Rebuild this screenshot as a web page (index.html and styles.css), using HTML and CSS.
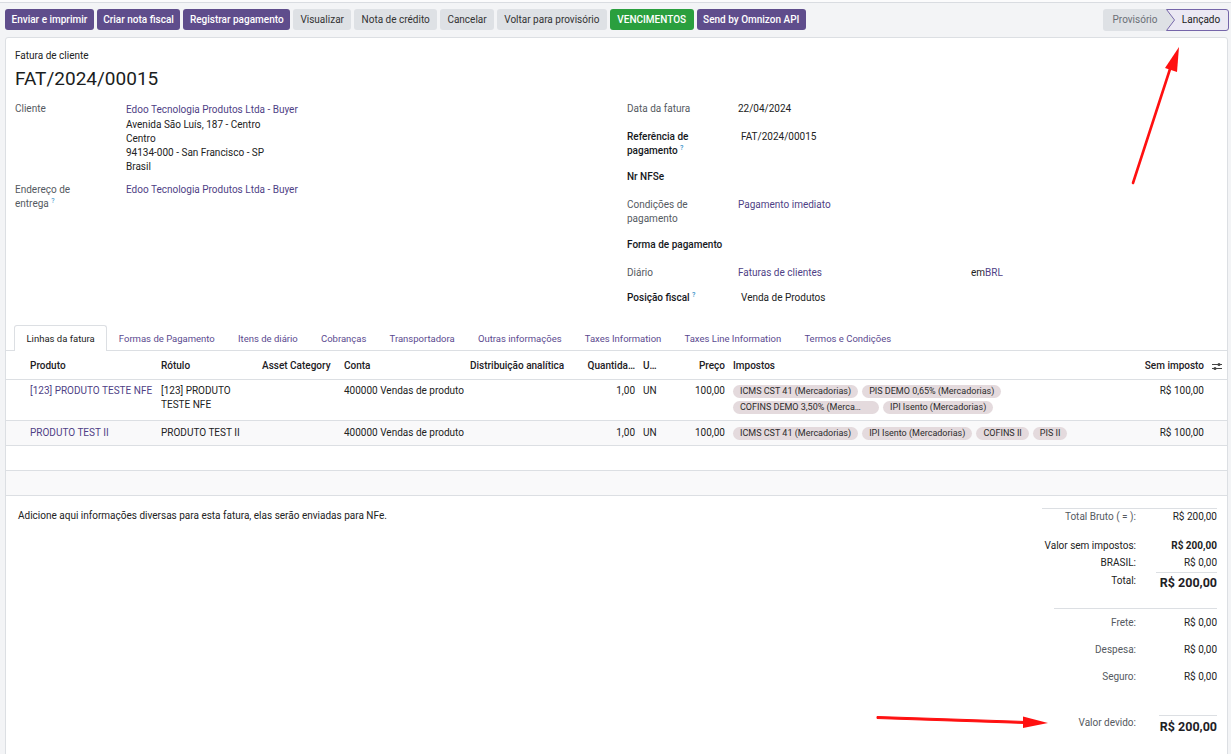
FILE: index.html
```html
<!DOCTYPE html>
<html lang="pt-BR">
<head>
<meta charset="utf-8">
<title>FAT/2024/00015</title>
<link rel="stylesheet" href="styles.css">
</head>
<body>
<div class="topline"></div>
<div class="cp">
  <div class="btns">
    <span class="btn pri">Enviar e imprimir</span>
    <span class="btn pri">Criar nota fiscal</span>
    <span class="btn pri">Registrar pagamento</span>
    <span class="btn sec">Visualizar</span>
    <span class="btn sec">Nota de crédito</span>
    <span class="btn sec">Cancelar</span>
    <span class="btn sec">Voltar para provisório</span>
    <span class="btn suc">VENCIMENTOS</span>
    <span class="btn pri">Send by Omnizon API</span>
  </div>
  <div class="status">
    <svg class="status-bg" width="126" height="22" viewBox="0 0 126 22">
      <path d="M3,0 H63 L71,11 L63,22 H3 Q0,22 0,19 V3 Q0,0 3,0 Z" fill="#dee1e5"/>
      <path d="M63.5,0.5 L71.5,11 L63.5,21.5 H123 Q125.5,21.5 125.5,19 V3 Q125.5,0.5 123,0.5 Z" fill="#ebe8f3" stroke="#7565a9"/>
    </svg>
    <span class="st st-draft">Provisório</span>
    <span class="st st-posted">Lançado</span>
  </div>
</div>

<div class="sheet">
  <div class="head">
    <div class="doctype">Fatura de cliente</div>
    <h1>FAT/2024/00015</h1>
  </div>

  <div class="groups">
    <div class="group gleft">
      <div class="row">
        <div class="lbl">Cliente</div>
        <div class="val">
          <div class="link first">Edoo Tecnologia Produtos Ltda - Buyer</div>
          <div>Avenida São Luís, 187 - Centro</div>
          <div>Centro</div>
          <div>94134-000 - San Francisco - SP</div>
          <div>Brasil</div>
        </div>
      </div>
      <div class="row">
        <div class="lbl">Endereço de<br>entrega <sup>?</sup></div>
        <div class="val"><div class="link">Edoo Tecnologia Produtos Ltda - Buyer</div></div>
      </div>
    </div>

    <div class="group gright">
      <div class="row">
        <div class="lbl">Data da fatura</div>
        <div class="val">22/04/2024</div>
      </div>
      <div class="row">
        <div class="lbl strong">Referência de<br>pagamento <sup>?</sup></div>
        <div class="val ind">FAT/2024/00015</div>
      </div>
      <div class="row">
        <div class="lbl strong">Nr NFSe</div>
        <div class="val"></div>
      </div>
      <div class="row">
        <div class="lbl">Condições de<br>pagamento</div>
        <div class="val link">Pagamento imediato</div>
      </div>
      <div class="row">
        <div class="lbl strong nowrap">Forma de pagamento</div>
        <div class="val"></div>
      </div>
      <div class="row">
        <div class="lbl">Diário</div>
        <div class="val split"><span class="link">Faturas de clientes</span><span class="cur">em</span><span class="link">BRL</span></div>
      </div>
      <div class="row tight">
        <div class="lbl strong">Posição fiscal <sup>?</sup></div>
        <div class="val ind">Venda de Produtos</div>
      </div>
    </div>
  </div>

  <div class="tabs">
    <span class="tab active">Linhas da fatura</span>
    <span class="tab">Formas de Pagamento</span>
    <span class="tab">Itens de diário</span>
    <span class="tab">Cobranças</span>
    <span class="tab">Transportadora</span>
    <span class="tab">Outras informações</span>
    <span class="tab">Taxes Information</span>
    <span class="tab">Taxes Line Information</span>
    <span class="tab">Termos e Condições</span>
  </div>

  <table class="lines">
    <colgroup>
      <col class="c-prod"><col class="c-rot"><col class="c-asset"><col class="c-conta"><col class="c-dist">
      <col class="c-qty"><col class="c-uom"><col class="c-price"><col class="c-tax"><col class="c-sub"><col class="c-opt">
    </colgroup>
    <thead>
      <tr>
        <th class="first">Produto</th>
        <th>Rótulo</th>
        <th>Asset Category</th>
        <th>Conta</th>
        <th>Distribuição analítica</th>
        <th class="r">Quantida…</th>
        <th>U…</th>
        <th class="r">Preço</th>
        <th>Impostos</th>
        <th class="r">Sem imposto</th>
        <th class="opt">
          <svg width="10" height="9" viewBox="0 0 10 9"><path d="M0 2.5H10M0 6.5H10" stroke="#444" stroke-width="1"/><circle cx="7" cy="2.5" r="1.5" fill="#444"/><circle cx="3" cy="6.5" r="1.5" fill="#444"/></svg>
        </th>
      </tr>
    </thead>
    <tbody>
      <tr class="tall">
        <td class="first link">[123] PRODUTO TESTE NFE</td>
        <td>[123] PRODUTO<br>TESTE NFE</td>
        <td></td>
        <td>400000 Vendas de produto</td>
        <td></td>
        <td class="r">1,00</td>
        <td>UN</td>
        <td class="r">100,00</td>
        <td class="taxes">
          <span class="tag">ICMS CST 41 (Mercadorias)</span><span class="tag">PIS DEMO 0,65% (Mercadorias)</span><br>
          <span class="tag trunc">COFINS DEMO 3,50% (Merca…</span><span class="tag">IPI Isento (Mercadorias)</span>
        </td>
        <td class="r">R$ 100,00</td>
        <td></td>
      </tr>
      <tr class="alt">
        <td class="first link">PRODUTO TEST II</td>
        <td>PRODUTO TEST II</td>
        <td></td>
        <td>400000 Vendas de produto</td>
        <td></td>
        <td class="r">1,00</td>
        <td>UN</td>
        <td class="r">100,00</td>
        <td class="taxes">
          <span class="tag">ICMS CST 41 (Mercadorias)</span><span class="tag">IPI Isento (Mercadorias)</span><span class="tag">COFINS II</span><span class="tag">PIS II</span>
        </td>
        <td class="r">R$ 100,00</td>
        <td></td>
      </tr>
      <tr class="empty"><td colspan="11"></td></tr>
      <tr class="empty alt"><td colspan="11"></td></tr>
    </tbody>
  </table>

  <div class="footer">
    <div class="notes">Adicione aqui informações diversas para esta fatura, elas serão enviadas para NFe.</div>
    <div class="totals">
      <div class="trow t-bruto"><span class="tl">Total Bruto ( = ):</span><span class="tv">R$ 200,00</span></div>
      <div class="trow t-untaxed"><span class="tl dark">Valor sem impostos:</span><span class="tv b">R$ 200,00</span></div>
      <div class="trow t-tax"><span class="tl dark">BRASIL:</span><span class="tv">R$ 0,00</span></div>
      <div class="trow t-total"><span class="tl dark">Total:</span><span class="tv big">R$ 200,00</span></div>
      <div class="trow t-frete"><span class="tl">Frete:</span><span class="tv">R$ 0,00</span></div>
      <div class="trow t-gap"><span class="tl">Despesa:</span><span class="tv">R$ 0,00</span></div>
      <div class="trow t-gap"><span class="tl">Seguro:</span><span class="tv">R$ 0,00</span></div>
      <div class="trow t-due"><span class="tl">Valor devido:</span><span class="tv big">R$ 200,00</span></div>
    </div>
  </div>
</div>

<svg class="arrows" width="1231" height="754" viewBox="0 0 1231 754">
  <line x1="1133" y1="183" x2="1171" y2="66" stroke="#ff1010" stroke-width="2.6" stroke-linecap="round"/>
  <polygon points="1179,47 1165,68 1177,72" fill="#ff1010"/>
  <path d="M877,716.5 L1026,721.5 L1026,723.5 L877,718.5 Z" fill="#ff1010" stroke="#ff1010" stroke-width="1"/>
  <polygon points="1023,716.5 1048,723 1023,728" fill="#ff1010"/>
</svg>
</body>
</html>
```

FILE: styles.css
```css
* { box-sizing: border-box; }

html, body { height: 754px; }

body {
  margin: 0;
  background: #f3f4f6;
  font-family: Roboto, "Liberation Sans", Arial, sans-serif;
  font-size: 10px;
  color: #212529;
  position: relative;
  overflow: hidden;
}

.topline {
  height: 3px;
  background: #fbfbfc;
  border-bottom: 1px solid #d9dce1;
}

.cp {
  display: flex;
  justify-content: space-between;
  align-items: flex-start;
  padding: 6px 2px 6px 5px;
}

.btns { display: flex; gap: 3px; }

.btn {
  display: inline-block;
  height: 21px;
  line-height: 21px;
  padding: 0 7.3px;
  border-radius: 3px;
  font-size: 10px;
  white-space: nowrap;
}
.pri { background: #5f4d8c; color: #fff; font-weight: 500; padding: 0 6.5px; }
.sec { background: #dee1e5; color: #333; }
.suc { background: #2a9f3e; color: #fff; font-weight: 500; padding: 0 7.5px; }

.status {
  position: relative;
  width: 126px;
  height: 22px;
  display: flex;
}
.status-bg { position: absolute; left: 0; top: 0; }
.st {
  position: relative;
  height: 22px;
  line-height: 22px;
  font-size: 10px;
  text-align: center;
}
.st-draft { width: 64px; color: #6b6f76; }
.st-posted { width: 62px; padding-left: 6px; color: #222; }

.sheet {
  margin: 0 3px 0 5px;
  background: #fff;
  border: 1px solid #dcdfe3;
  border-radius: 3px;
  min-height: 740px;
}

.head { padding: 11px 9px 0; }
.doctype { line-height: 14px; font-size: 10px; color: #222; }
h1 {
  margin: 4px 0 0;
  font-size: 19px;
  line-height: 24px;
  font-weight: 400;
  color: #1a1d21;
}

.groups {
  display: flex;
  align-items: flex-start;
  padding: 0 9px;
  margin-top: 11px;
}
.group {
  flex: 0 0 612px;
  display: flex;
  flex-direction: column;
  gap: 12px;
}
.gleft { gap: 9px; }
.gright { flex: 1; }

.row {
  display: flex;
  min-height: 16px;
  line-height: 14px;
}
.row.tight { margin-top: -3px; }
.lbl {
  flex: 0 0 111px;
  color: #555a61;
}
.lbl.strong { color: #15181c; font-weight: 500; }
.lbl.nowrap { white-space: nowrap; }
.lbl sup {
  font-size: 7px;
  color: #2f8fc8;
  vertical-align: 4px;
  line-height: 0;
}
.val { flex: 1; color: #222; }
.val .first { line-height: 16px; }
.val.ind { padding-left: 3px; }
.split { display: flex; }
.split > .link:first-child { width: 233px; }
.cur { color: #222; }

.link { color: #4f3f86; }

.tabs {
  margin-top: 18px;
  padding-left: 8px;
  border-bottom: 1px solid #dcdfe3;
  display: flex;
  height: 26px;
}
.tab {
  height: 26px;
  line-height: 25px;
  padding: 0 10.6px;
  font-size: 9.5px;
  color: #5b4a8f;
  border: 1px solid transparent;
  border-bottom: none;
  white-space: nowrap;
}
.tab.active {
  color: #222;
  background: #fff;
  border-color: #dcdfe3;
  border-radius: 3px 3px 0 0;
  margin-bottom: -1px;
  padding: 0 11.5px;
}

.lines {
  width: 1221px;
  border-collapse: collapse;
  table-layout: fixed;
}
.c-prod { width: 151px; }
.c-rot { width: 101px; }
.c-asset { width: 82px; }
.c-conta { width: 126px; }
.c-dist { width: 115px; }
.c-qty { width: 58px; }
.c-uom { width: 27px; }
.c-price { width: 63px; }
.c-tax { width: 401px; }
.c-sub { width: 78px; }
.c-opt { width: 19px; }

.lines th {
  height: 28px;
  padding: 2px 4px 0;
  font-weight: 500;
  text-align: left;
  color: #1d2024;
  border-bottom: 1px solid #dcdfe3;
  white-space: nowrap;
  overflow: hidden;
}
.lines th.r, .lines td.r { text-align: right; }
.lines th.opt { padding: 2px 5px 0 0; text-align: right; }
.lines th.opt svg { display: inline-block; vertical-align: middle; }
.lines th.first, .lines td.first { padding-left: 24px; }

.lines td {
  padding: 5px 4px 5px;
  line-height: 14px;
  vertical-align: top;
  border-bottom: 1px solid #dcdfe3;
  color: #222;
  white-space: nowrap;
}
.lines tr.tall td { padding-top: 4px; padding-bottom: 4px; height: 41px; }
.lines tr.alt td { background: #f9f9fa; }
.lines tr.empty td { height: 25px; padding: 0; }
.lines td.link { color: #4f3f86; }

.lines td.taxes { padding-top: 4px; padding-bottom: 4px; line-height: 16px; }
.lines tr.alt td.taxes { padding-top: 5px; padding-bottom: 5px; line-height: 14px; }
.tag {
  display: inline-block;
  height: 13px;
  line-height: 13px;
  padding: 0 7px;
  margin-right: 4px;
  border-radius: 7px;
  background: #e4dadd;
  color: #2c2c2c;
  font-size: 9px;
  vertical-align: top;
  margin-top: 1px;
}
.tag.trunc { width: 146px; }

.footer {
  display: flex;
  justify-content: space-between;
  align-items: flex-start;
  padding: 12px 10px 0 12px;
}
.notes {
  line-height: 14px;
  margin-top: 1px;
  color: #222;
}

.totals {
  width: 175px;
  border-top: 1px solid #dcdfe3;
  display: flex;
  flex-direction: column;
}
.trow {
  display: flex;
  align-items: center;
  line-height: 14px;
  white-space: nowrap;
}
.tl {
  flex: 1;
  text-align: right;
  padding-right: 8px;
  color: #555a61;
}
.tl.dark { color: #222; }
.tv {
  flex: 0 0 73px;
  text-align: right;
  color: #222;
}
.tv.b { font-weight: 700; }
.tv.big { font-weight: 700; font-size: 12.5px; line-height: 17px; color: #1e2125; }

.t-bruto { margin-top: 1px; }
.t-untaxed { margin-top: 15px; }
.t-tax { margin-top: 3px; }
.t-total { margin-top: 2px; }
.t-total .tv { border-top: 1px solid #dcdfe3; padding-top: 1px; margin-left: 12px; flex-basis: 61px; }
.t-frete {
  margin-top: 17px;
  margin-left: 12px;
  border-top: 1px solid #dcdfe3;
  padding-top: 7px;
}
.t-gap { margin-top: 13px; }
.t-due { margin-top: 31px; align-items: flex-end; }
.t-due .tl { padding-bottom: 5px; }
.t-due .tv { border-top: 1px solid #dcdfe3; padding-top: 2px; margin-left: 15px; flex-basis: 58px; }

.arrows {
  position: absolute;
  left: 0;
  top: 0;
  pointer-events: none;
}
```
